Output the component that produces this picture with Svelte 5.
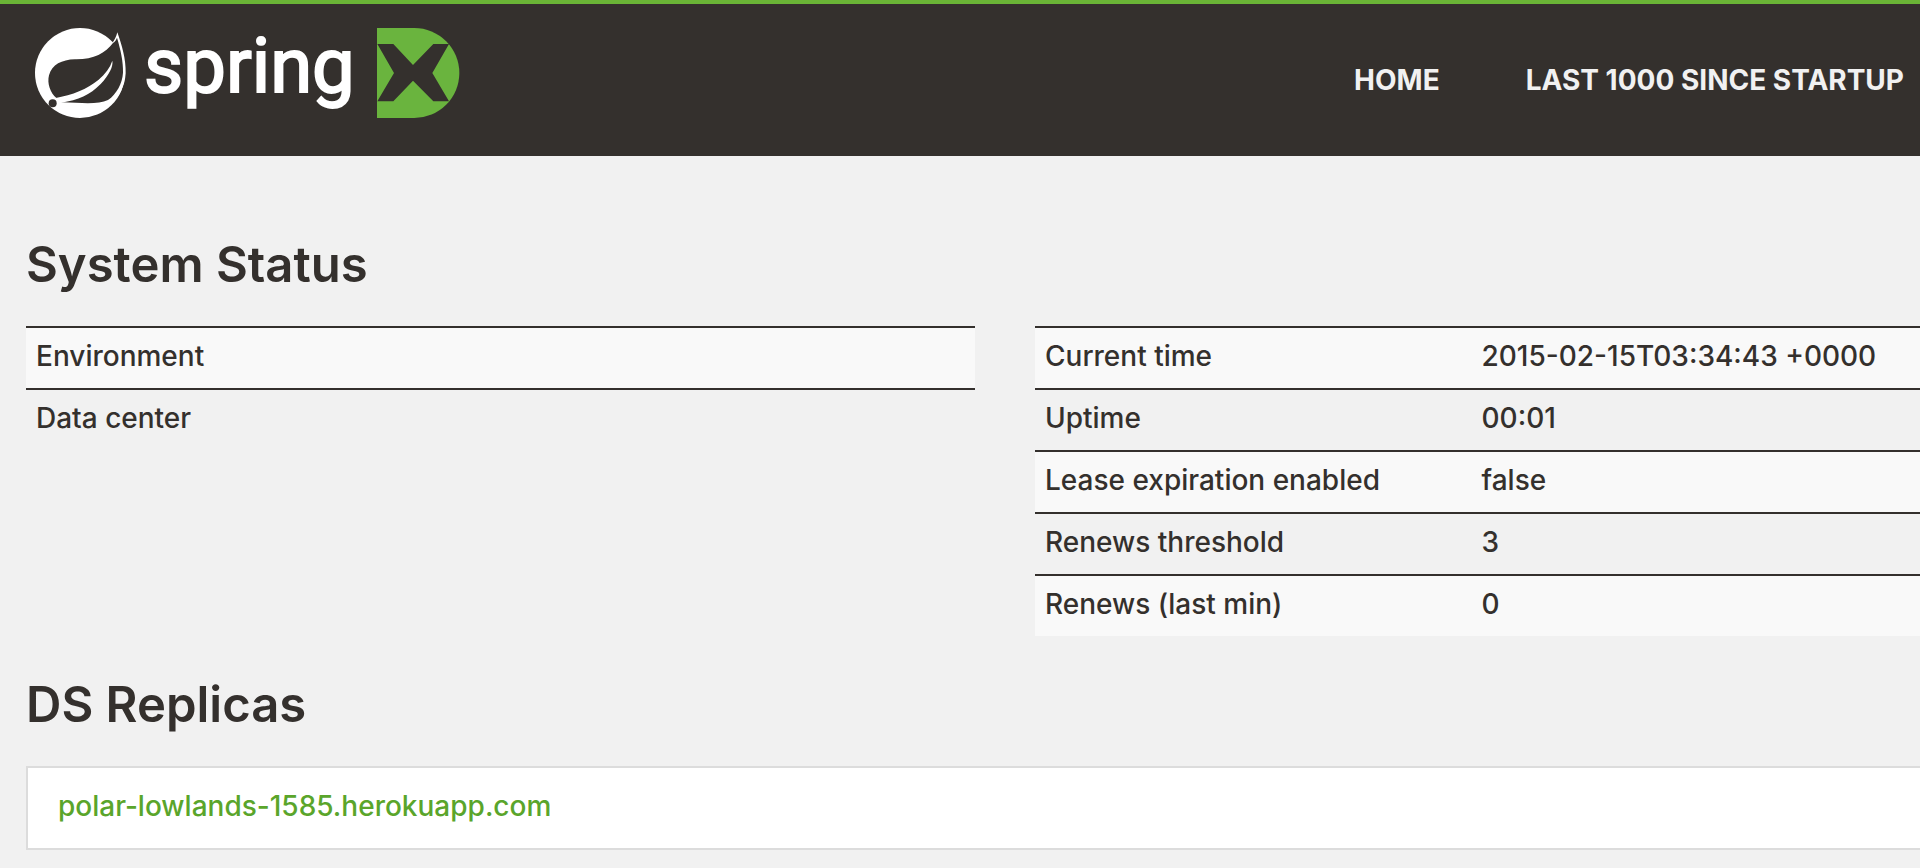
<script>
  const links = [
    { label: 'Home', href: '#home' },
    { label: 'Last 1000 since startup', href: '#lastn' }
  ];
  const environment = [
    ['Environment', ''],
    ['Data center', '']
  ];
  const instance = [
    ['Current time', '2015-02-15T03:34:43 +0000'],
    ['Uptime', '00:01'],
    ['Lease expiration enabled', 'false'],
    ['Renews threshold', '3'],
    ['Renews (last min)', '0']
  ];
  const replicas = ['polar-lowlands-1585.herokuapp.com'];
</script>

{#snippet statusTable(rows)}
  <table>
    <tbody>
      {#each rows as [name, value]}
        <tr>
          <th scope="row">{name}</th>
          <td>{value}</td>
        </tr>
      {/each}
    </tbody>
  </table>
{/snippet}

<header>
  <a class="brand" href="#home">
    <svg width="92" height="90" viewBox="15 24 276 270" aria-hidden="true">
      <circle cx="150" cy="159" r="135" fill="#fff" />
      <path
        fill="#fff"
        d="M246 70C254 60 259 49 262 37C276 76 288 118 287 160C285 200 265 235 240 255L200 200Z"
      />
      <path
        fill="#34302d"
        d="M80 235C60 218 51 190 57 166C66 134 95 119 135 118C190 119 226 100 249 69C255 65 259 59 261 53C272 90 280 125 279 158C277 190 260 222 234 240C205 254 160 249 95 247Z"
      />
      <path
        fill="#fff"
        d="M74 235C130 224 170 208 205 180C226 162 240 143 247 122C250 139 238 164 212 192C180 225 145 240 94 248Z"
      />
      <circle cx="68" cy="250" r="12" fill="#34302d" />
    </svg>
    <span>spring</span>
    <svg width="83" height="90" viewBox="21 24 249 270" aria-hidden="true">
      <path fill="#6ab43e" d="M21 24H133A135 135 0 0 1 133 294H21Z" />
      <path
        fill="#34302d"
        d="M22 72H70L129 135L190 72H237L187 159L237 244H190L129 182L70 244H22L72 159Z"
      />
    </svg>
  </a>
  <nav>
    {#each links as link}
      <a href={link.href}>{link.label}</a>
    {/each}
  </nav>
</header>

<main>
  <h1>System Status</h1>
  <div class="columns">
    {@render statusTable(environment)}
    {@render statusTable(instance)}
  </div>

  <h1>DS Replicas</h1>
  <ul>
    {#each replicas as host}
      <li><a href="#{host}">{host}</a></li>
    {/each}
  </ul>
</main>

<style>
  :global(body) {
    background: #f1f1f1;
    color: #34302d;
    font: 500 28px/40px 'Inter', sans-serif;
    overflow-x: hidden;
  }
  header {
    display: flex;
    justify-content: space-between;
    align-items: flex-start;
    padding: 24px 16px 38px 35px;
    border-top: 4px solid #6ab436;
    background: #34302d;
  }
  .brand {
    display: grid;
    grid-template-columns: 92px 216px 83px;
    column-gap: 17px;
    align-items: start;
    color: #fff;
    text-decoration: none;
  }
  .brand svg {
    display: block;
  }
  .brand span {
    font: 400 76px/76px 'Roboto', sans-serif;
    -webkit-text-stroke: 2px #fff;
    paint-order: stroke;
  }
  nav {
    display: flex;
    gap: 86px;
    padding-top: 36px;
    font-weight: 700;
    line-height: 32px;
  }
  nav a {
    color: #f1f1f1;
    text-decoration: none;
    text-transform: uppercase;
    white-space: nowrap;
  }
  main {
    padding: 82px 0 18px 26px;
  }
  h1 {
    margin: 0 0 34px;
    font-size: 49px;
    font-weight: 600;
    line-height: 54px;
  }
  /* The second column and the list run on past the window's right edge. */
  .columns {
    display: grid;
    grid-template-columns: 1fr 1fr;
    align-items: start;
    gap: 60px;
    margin: 0 -64px 42px 0;
  }
  table {
    width: 100%;
    border-collapse: separate;
    border-spacing: 0;
    table-layout: fixed;
  }
  th,
  td {
    padding: 8px 10px 12px;
    border-top: 2px solid #34302d;
    text-align: left;
    font-weight: 500;
  }
  th {
    width: 46%;
    box-sizing: border-box;
    white-space: nowrap;
  }
  tr:nth-child(odd) {
    background: #f9f9f9;
  }
  ul {
    margin: 0 -64px 0 0;
    padding: 0;
    list-style: none;
  }
  li {
    padding: 18px 30px 22px;
    border: 2px solid #dcdcdc;
    background: #fff;
  }
  li a {
    color: #5aa52b;
    text-decoration: none;
  }
</style>
